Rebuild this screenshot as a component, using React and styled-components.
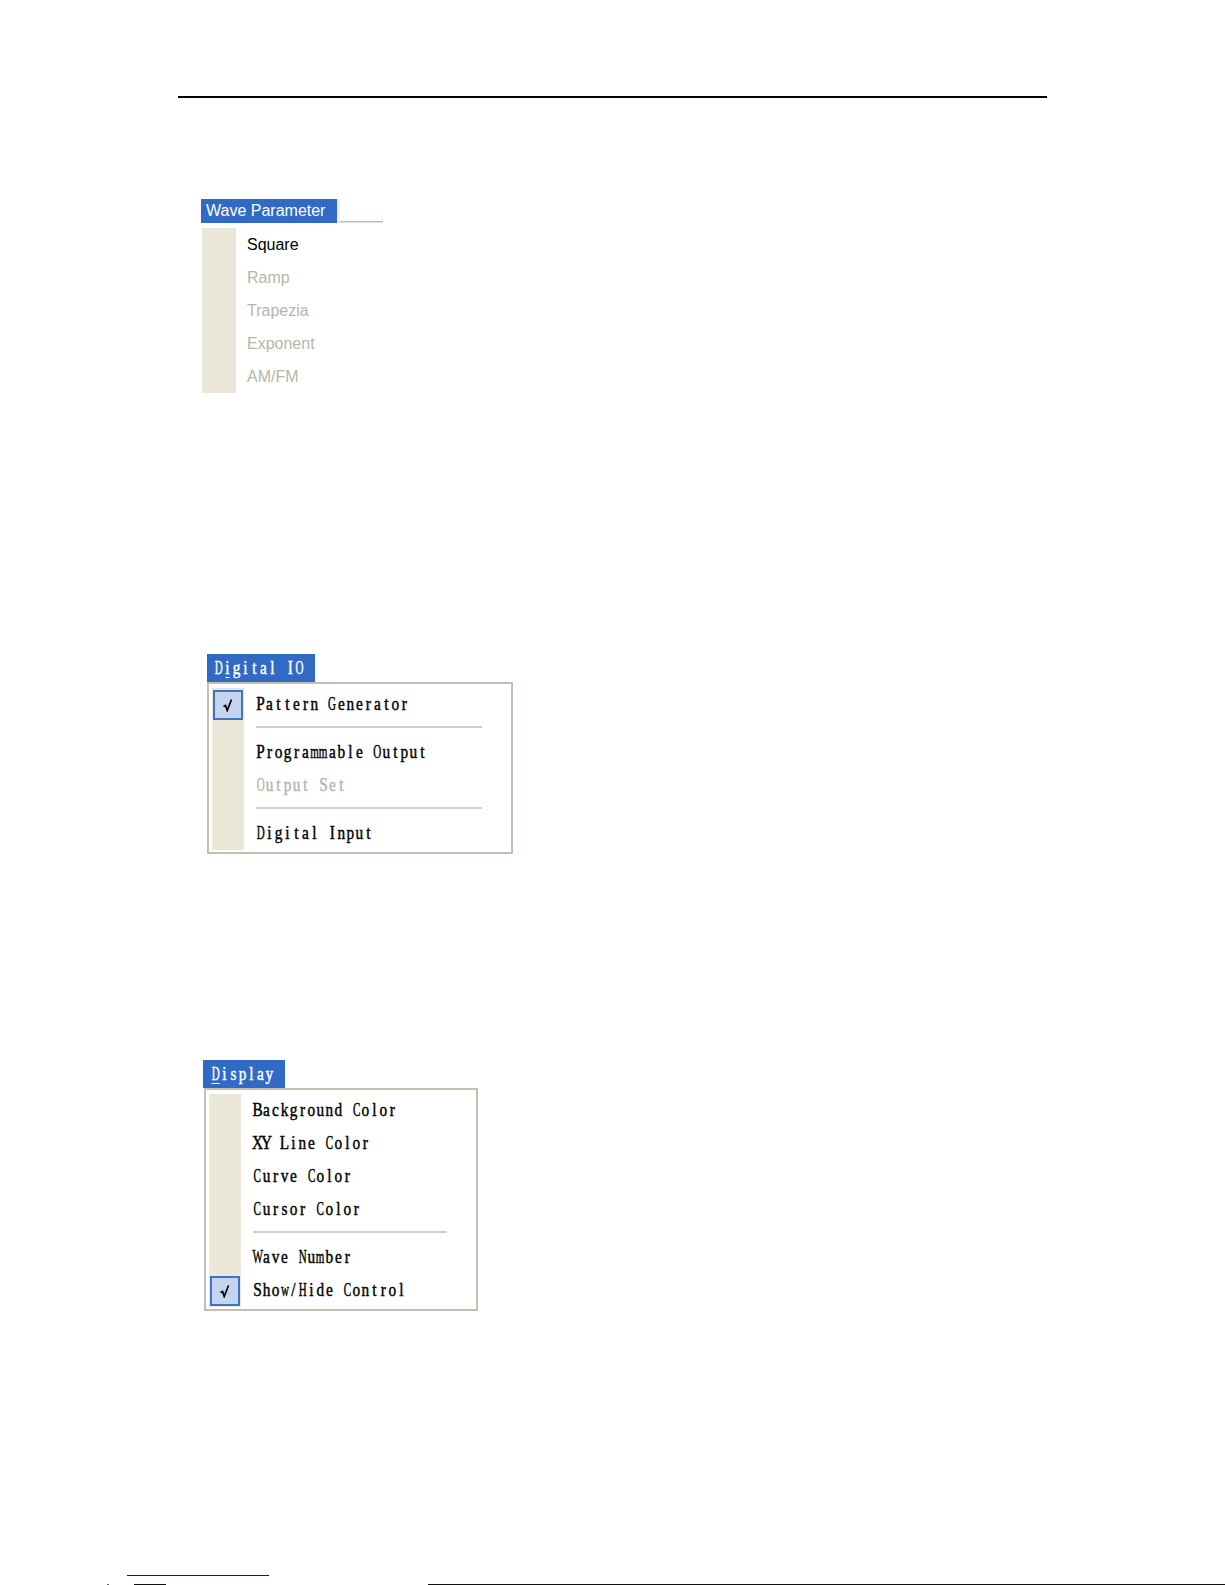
import React from "react"
import styled, { createGlobalStyle } from "styled-components"

const GlobalStyle = createGlobalStyle`
  html, body {
    margin: 0;
    padding: 0;
    background: #fff;
  }
`

const Page = styled.div`
  width: 1225px;
  height: 1585px;
  overflow: hidden;
  background: #fff;
  display: flex;
  flex-direction: column;
`

const HeaderRule = styled.div`
  margin: 96px 0 0 178px;
  width: 869px;
  height: 2px;
  background: #000;
`

const Section = styled.div`
  margin-top: ${p => p.$top}px;
  margin-left: ${p => p.$left}px;
  display: flex;
  flex-direction: column;
  align-items: flex-start;
`

const TabRow = styled.div`
  display: flex;
`

const Tab = styled.div`
  height: ${p => p.$h}px;
  width: ${p => p.$w}px;
  box-sizing: border-box;
  background: #316ac5;
  color: #fff;
  display: flex;
  align-items: center;
  padding-left: ${p => p.$pad}px;
  font-family: "Liberation Sans", Arial, sans-serif;
  font-size: 16px;
  white-space: pre;
`

const TabTail = styled.div`
  width: 43px;
  height: 24px;
  border-left: 3px solid #f1efe3;
  box-sizing: content-box;
  position: relative;
  &::after {
    content: "";
    position: absolute;
    left: 0;
    right: 0;
    bottom: 0;
    height: 2px;
    background: linear-gradient(#bdbaa9 50%, #e4e1d4 50%);
  }
`

/* SimSun-like fixed pitch serif: every glyph sits in a 9px cell */
const MonoWord = styled.span`
  display: inline-flex;
  transform: scaleX(0.85);
  transform-origin: left center;
  font-family: "Liberation Serif", "Times New Roman", serif;
  font-size: 18px;
  -webkit-text-stroke: 0.45px currentColor;
  white-space: pre;
`

const Cell = styled.span`
  display: inline-flex;
  justify-content: center;
  width: 10.59px;
  text-decoration: ${p => (p.$u ? "underline" : "none")};
  text-underline-offset: 3px;
  text-decoration-thickness: 1px;
`

const Glyph = styled.span`
  display: inline-block;
  transform: ${p => (p.$narrow ? "scaleX(0.72)" : "none")};
`

const WIDE = "mwMWNHDGOC"

function Mono({ text, underline = -1 }) {
  return (
    <MonoWord>
      {text.split("").map((ch, i) => (
        <Cell key={i} $u={i === underline}>
          <Glyph $narrow={WIDE.includes(ch)}>{ch}</Glyph>
        </Cell>
      ))}
    </MonoWord>
  )
}

const PlainList = styled.div`
  margin: 5px 0 0 1px;
  display: flex;
  flex-direction: column;
`

const MenuBox = styled.div`
  width: ${p => p.$w}px;
  box-sizing: border-box;
  margin-left: ${p => p.$shift || 0}px;
  border: 2px solid #c3c0b3;
  padding: 4px 3px 2px 3px;
  background: #fff;
  display: flex;
  flex-direction: column;
`

const Row = styled.div`
  display: flex;
  height: ${p => p.$h || 33}px;
`

const Gutter = styled.div`
  width: ${p => p.$w || 32}px;
  flex-shrink: 0;
  background: #ebe8da;
  display: flex;
  align-items: center;
  justify-content: center;
`

const Label = styled.div`
  padding-left: ${p => p.$pad || 12}px;
  display: flex;
  align-items: center;
  white-space: pre;
  color: ${p => (p.$disabled ? "#b8b5a9" : "#000")};
  font-family: "Liberation Sans", Arial, sans-serif;
  font-size: 16px;
`

const SepLine = styled.div`
  flex: 1;
  margin: 5px 26px 0 12px;
  height: 2px;
  background: #d2cfc3;
`

const CheckBox = styled.div`
  width: 30px;
  height: 30px;
  box-sizing: border-box;
  border: 2px solid #3d74c9;
  background: #c4d5f0;
  display: flex;
  align-items: center;
  justify-content: center;
`

const Footer = styled.div`
  margin-top: auto;
  display: flex;
  flex-direction: column;
`

const LinkLine = styled.div`
  margin-left: 127px;
  width: 142px;
  height: 1px;
  background: #0000ff;
`

const BottomRow = styled.div`
  margin-top: 8px;
  height: 1px;
  display: flex;
`

const Mark = styled.div`
  margin-left: ${p => p.$gap}px;
  width: ${p => p.$w}px;
  height: 1px;
  background: ${p => p.$c || "#111"};
`

const Tick = () => (
  <svg width="12" height="14" viewBox="0 0 12 14">
    <path d="M1.5 8.5 L3.5 7.5 L5.2 12.5 L9.5 1.5" fill="none" stroke="#000" strokeWidth="1.7" />
  </svg>
)

function MenuRow({ label, disabled, checked }) {
  return (
    <Row>
      <Gutter>{checked && <CheckBox><Tick /></CheckBox>}</Gutter>
      <Label $disabled={disabled}><Mono text={label} /></Label>
    </Row>
  )
}

function Separator() {
  return (
    <Row $h={15}>
      <Gutter />
      <SepLine />
    </Row>
  )
}

const waveItems = [
  { label: "Square" },
  { label: "Ramp", disabled: true },
  { label: "Trapezia", disabled: true },
  { label: "Exponent", disabled: true },
  { label: "AM/FM", disabled: true },
]

export default function App() {
  return (
    <Page>
      <GlobalStyle />
      <HeaderRule />

      <Section $top={101} $left={201}>
        <TabRow>
          <Tab $w={136} $h={24} $pad={5}>Wave Parameter</Tab>
          <TabTail />
        </TabRow>
        <PlainList>
          {waveItems.map(item => (
            <Row key={item.label}>
              <Gutter $w={34} />
              <Label $pad={11} $disabled={item.disabled}>{item.label}</Label>
            </Row>
          ))}
        </PlainList>
      </Section>

      <Section $top={261} $left={207}>
        <Tab $w={108} $h={28} $pad={7}>
          <Mono text="Digital IO" underline={1} />
        </Tab>
        <MenuBox $w={306}>
          <MenuRow checked label="Pattern Generator" />
          <Separator />
          <MenuRow label="Programmable Output" />
          <MenuRow disabled label="Output Set" />
          <Separator />
          <MenuRow label="Digital Input" />
        </MenuBox>
      </Section>

      <Section $top={206} $left={203}>
        <Tab $w={82} $h={28} $pad={8}>
          <Mono text="Display" underline={0} />
        </Tab>
        <MenuBox $w={274} $shift={1}>
          <MenuRow label="Background Color" />
          <MenuRow label="XY Line Color" />
          <MenuRow label="Curve Color" />
          <MenuRow label="Cursor Color" />
          <Separator />
          <MenuRow label="Wave Number" />
          <MenuRow checked label="Show/Hide Control" />
        </MenuBox>
      </Section>

      <Footer>
        <LinkLine />
        <BottomRow>
          <Mark $gap={107} $w={2} $c="#666" />
          <Mark $gap={25} $w={32} />
          <Mark $gap={262} $w={797} />
        </BottomRow>
      </Footer>
    </Page>
  )
}
